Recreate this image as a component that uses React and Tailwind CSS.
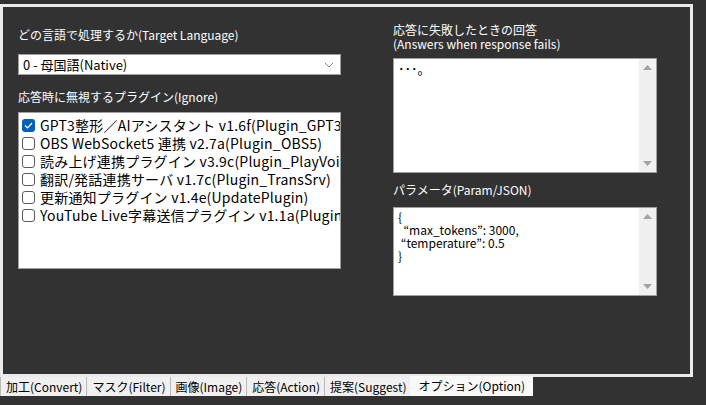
import React from 'react';

const FONT = '"Noto Sans CJK JP", "Noto Sans", sans-serif';

// 右側のスクロールバー
const ScrollBar = () => (
  <div className="w-[17px] h-full bg-[#f0f0f0] flex flex-col justify-between items-center py-[6px]">
    <svg width="9" height="5" viewBox="0 0 9 5"><path d="M0 5 L4.5 0 L9 5 Z" fill="#a3a3a3" /></svg>
    <svg width="9" height="5" viewBox="0 0 9 5"><path d="M0 0 L4.5 5 L9 0 Z" fill="#a3a3a3" /></svg>
  </div>
);

const CheckBox = ({ checked }) => (
  checked ? (
    <div className="w-[13px] h-[13px] rounded-[3px] bg-[#005fb8] flex items-center justify-center shrink-0">
      <svg width="9" height="7" viewBox="0 0 9 7"><path d="M1 3.5 L3.5 6 L8 1" stroke="white" strokeWidth="1.2" fill="none" /></svg>
    </div>
  ) : (
    <div className="w-[13px] h-[13px] rounded-[3px] border border-[#5a5a5a] bg-white shrink-0" />
  )
);

const plugins = [
  { name: 'GPT3整形／AIアシスタント v1.6f(Plugin_GPT3)', checked: true },
  { name: 'OBS WebSocket5 連携 v2.7a(Plugin_OBS5)' },
  { name: '読み上げ連携プラグイン v3.9c(Plugin_PlayVoice)' },
  { name: '翻訳/発話連携サーバ v1.7c(Plugin_TransSrv)' },
  { name: '更新通知プラグイン v1.4e(UpdatePlugin)' },
  { name: 'YouTube Live字幕送信プラグイン v1.1a(Plugin_YouTube)' },
];

const tabs = ['加工(Convert)', 'マスク(Filter)', '画像(Image)', '応答(Action)', '提案(Suggest)'];

export default function App() {
  return (
    <div className="w-[706px] h-[405px] bg-[#323232] text-white overflow-hidden" style={{ fontFamily: FONT }}>
      <div className="h-[4px]" />
      {/* 枠 */}
      <div className="w-[693px] h-[373px] border-[3px] border-[#ebebeb] flex pl-[15px]">
        {/* 左列 */}
        <div className="w-[323px] flex flex-col">
          <div className="mt-[21px] h-[14px] text-[12px] leading-[14px] whitespace-nowrap">どの言語で処理するか(Target Language)</div>
          <div className="mt-[12px] h-[21px] bg-white border border-[#a0a0a0] flex items-center justify-between pl-[4px] pr-[6px] text-black text-[13px] leading-[19px]">
            <span>0 - 母国語(Native)</span>
            <svg width="10" height="6" viewBox="0 0 10 6"><path d="M1 1 L5 5 L9 1" stroke="#888" strokeWidth="1" fill="none" /></svg>
          </div>
          <div className="mt-[15px] h-[14px] text-[12px] leading-[14px] whitespace-nowrap">応答時に無視するプラグイン(Ignore)</div>
          <div className="mt-[8px] h-[157px] bg-white border border-[#a0a0a0] overflow-hidden pt-[3px] pl-[3px]">
            {plugins.map((p) => (
              <div key={p.name} className="h-[18px] flex items-center gap-[5px] whitespace-nowrap text-black text-[14px] leading-[18px] tracking-[0.2px]">
                <CheckBox checked={p.checked} />
                <span>{p.name}</span>
              </div>
            ))}
          </div>
        </div>

        {/* 右列 */}
        <div className="ml-[52px] w-[264px] flex flex-col">
          <div className="mt-[16px] text-[12px] leading-[14px] whitespace-nowrap">
            <div>応答に失敗したときの回答</div>
            <div>(Answers when response fails)</div>
          </div>
          <div className="mt-[7px] h-[115px] bg-white border border-[#a0a0a0] flex text-black">
            <div className="flex-1 px-[4px] pt-[3px] text-[13px] leading-[14px]">･･･。</div>
            <ScrollBar />
          </div>
          <div className="mt-[10px] h-[14px] text-[12px] leading-[14px]">パラメータ(Param/JSON)</div>
          <div className="mt-[10px] h-[89px] bg-white border border-[#a0a0a0] flex text-black">
            <div className="flex-1 px-[4px] pt-[2px] text-[12px] leading-[13px] whitespace-pre">{'{\n  “max_tokens”: 3000,\n “temperature”: 0.5\n}'}</div>
            <ScrollBar />
          </div>
        </div>
      </div>

      {/* タブ */}
      <div className="flex items-start text-black text-[12px] whitespace-nowrap">
        {tabs.map((t) => (
          <div key={t} className="h-[19px] bg-[#f0f0f0] border-l border-[#b8b8b8] pl-[5px] pr-[4px] leading-[19px]">{t}</div>
        ))}
        <div className="h-[20px] -mt-[1px] bg-[#f9f9f9] px-[8px] leading-[20px]">オプション(Option)</div>
      </div>
    </div>
  );
}
